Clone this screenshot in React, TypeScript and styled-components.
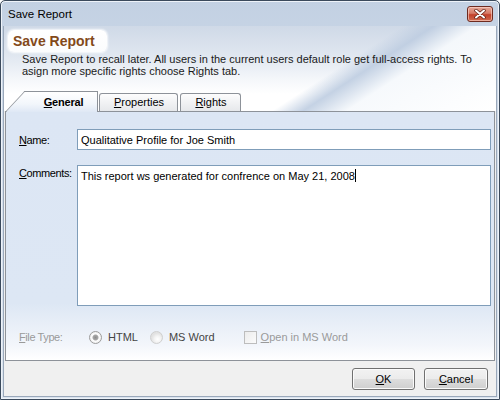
import React from "react";
import styled, { createGlobalStyle } from "styled-components";

const GlobalStyle = createGlobalStyle`
  html, body { margin: 0; padding: 0; }
  body {
    width: 500px; height: 400px; overflow: hidden;
    font-family: "Liberation Sans", Arial, sans-serif;
    font-size: 11px; color: #000;
  }
  * { box-sizing: border-box; }
`;

const Window = styled.div`
  width: 500px;
  height: 400px;
  border: 1px solid #3b4a5c;
  border-radius: 5px 5px 0 0;
  background: linear-gradient(to bottom, #c3d1e3 0%, #d2ddeb 40%, #dbe4ef 100%);
  padding: 0 2px 2px;
  display: flex;
  flex-direction: column;
  box-shadow: inset 0 0 0 1px #eef3f9;
`;

const TitleBar = styled.div`
  height: 25px;
  flex: none;
  display: flex;
  align-items: center;
  justify-content: space-between;
  padding: 0 4px 0 5px;
`;

const TitleText = styled.span`
  font-size: 11.5px;
  color: #000;
`;

const CloseButton = styled.div`
  width: 26px;
  height: 16px;
  border: 1px solid #6e2b20;
  border-radius: 3px;
  background: linear-gradient(to bottom, #e4a898 0%, #d77a66 45%, #c2402a 55%, #d06a4e 100%);
  box-shadow: inset 0 0 0 1px rgba(255, 220, 210, 0.6);
  display: flex;
  align-items: center;
  justify-content: center;
`;

const Body = styled.div`
  flex: 1;
  display: flex;
  flex-direction: column;
  background: #f0f0f0;
  border: 1px solid #9aa8ba;
  border-top: none;
`;

const Top = styled.div`
  height: 85px;
  flex: none;
  display: flex;
  flex-direction: column;
  background:
    linear-gradient(147deg, rgba(255,255,255,0) 0%, rgba(255,255,255,0) 64%, rgba(190,205,225,0.9) 69%, rgba(246,249,252,0.95) 76%, rgba(255,255,255,0.9) 100%),
    linear-gradient(to bottom, #cfd9e7 0%, #e0e7f0 35%, #f6f8fb 65%, #ffffff 80%);
`;

const Badge = styled.div`
  align-self: flex-start;
  margin: 4px 0 0 4px;
  height: 22px;
  padding: 0 12px 0 5px;
  border-radius: 6px;
  background: linear-gradient(to bottom, #ffffff, #fbfcfd);
  box-shadow: 0 0 2px 1px rgba(255, 255, 255, 0.8);
  font-size: 14px;
  font-weight: bold;
  line-height: 22px;
  color: #83491a;
`;

const Description = styled.p`
  margin: 1px 0 0 18px;
  width: 460px;
  font-size: 11px;
  line-height: 12px;
  color: #1a1a1a;
`;

const TabStrip = styled.div`
  margin-top: auto;
  height: 20px;
  display: flex;
  align-items: flex-end;
  padding-left: 1px;
  position: relative;
  z-index: 1;
`;

const SelectedTab = styled.div`
  position: relative;
  z-index: 1;
  margin-left: 20px;
  width: 73px;
  height: 21px;
  margin-bottom: -1px;
  border-top: 1px solid #8d9299;
  border-right: 1px solid #8d9299;
  background: linear-gradient(to bottom, #ffffff 0%, #f2f6fb 60%, #dfe8f5 100%);
  display: flex;
  align-items: center;
  justify-content: center;
  padding: 0 0 1px 5px;
  font-weight: bold;
  letter-spacing: -0.2px;

  &::before {
    content: "";
    position: absolute;
    z-index: -1;
    left: -20px;
    top: -1px;
    bottom: 0;
    width: 32px;
    border-left: 1px solid #8d9299;
    border-top: 1px solid #8d9299;
    background: linear-gradient(to bottom, #ffffff 0%, #f2f6fb 60%, #dfe8f5 100%);
    transform-origin: bottom left;
    transform: skewX(-43deg);
  }
`;

const Tab = styled.div<{ $width: number; $gap: number }>`
  width: ${(p) => p.$width}px;
  margin-left: ${(p) => p.$gap}px;
  height: 18px;
  border: 1px solid #8d9299;
  border-bottom: none;
  border-radius: 3px 3px 0 0;
  background: linear-gradient(to bottom, #fdfdfd 0%, #f1f2f4 50%, #e6e8eb 100%);
  display: flex;
  align-items: center;
  justify-content: center;
  padding: 0 0 1px 1px;
`;

const Panel = styled.div`
  flex: none;
  height: 250px;
  margin: 0 1px;
  border: 1px solid #8d9299;
  background: linear-gradient(to bottom, #dce6f4 0%, #dde7f4 77%, #f3f6fb 94%, #ffffff 100%);
  padding: 17px 3px 0 13px;
  display: flex;
  flex-direction: column;
`;

const FormGrid = styled.div`
  display: grid;
  grid-template-columns: 58px 1fr;
  row-gap: 15px;
`;

const FieldLabel = styled.div<{ $top?: boolean }>`
  align-self: ${(p) => (p.$top ? "start" : "center")};
  padding-top: ${(p) => (p.$top ? "2px" : "0")};
  letter-spacing: -0.4px;
  color: #000;
`;

const TextField = styled.div`
  height: 21px;
  border: 1px solid #7f9db9;
  background: #fff;
  padding: 0 3px;
  display: flex;
  align-items: center;
  white-space: nowrap;
`;

const TextArea = styled.div`
  height: 141px;
  border: 1px solid #7f9db9;
  background: #fff;
  padding: 3px 3px;
  line-height: 14px;
`;

const Caret = styled.span`
  display: inline-block;
  width: 1px;
  height: 13px;
  background: #000;
  vertical-align: -2px;
`;

const OptionsRow = styled.div`
  margin-top: 21px;
  height: 20px;
  display: flex;
  align-items: center;
`;

const DimLabel = styled.span<{ $width?: number }>`
  color: #9a9a9a;
  letter-spacing: -0.4px;
  ${(p) => (p.$width ? `width: ${p.$width}px;` : "")}
`;

const Option = styled.div<{ $gap: number }>`
  display: flex;
  align-items: center;
  margin-left: ${(p) => p.$gap}px;
`;

const Radio = styled.span<{ $checked?: boolean }>`
  width: 13px;
  height: 13px;
  border-radius: 50%;
  border: 1px solid ${(p) => (p.$checked ? "#9c9c9c" : "#cfcfcf")};
  background: ${(p) =>
    p.$checked
      ? "radial-gradient(circle at 50% 50%, #8c8c8c 0, #a8a8a8 2.5px, #ffffff 3.5px, #f3f3f3 5px)"
      : "radial-gradient(circle at 60% 65%, #ffffff 0, #f4f4f4 3px, #e2e2e2 6px)"};
  margin-right: 6px;
  flex: none;
`;

const Check = styled.span`
  width: 13px;
  height: 13px;
  border: 1px solid #bdbdbd;
  background: linear-gradient(135deg, #ececec, #fbfbfb);
  margin-right: 4px;
  flex: none;
`;

const OptionText = styled.span<{ $dim?: boolean }>`
  color: ${(p) => (p.$dim ? "#9a9a9a" : "#444")};
`;

const Footer = styled.div`
  flex: 1;
  display: flex;
  justify-content: flex-end;
  align-items: flex-start;
  gap: 9px;
  padding: 7px 8px 0 0;
`;

const Button = styled.div<{ $width: number }>`
  width: ${(p) => p.$width}px;
  height: 22px;
  border: 1px solid #707070;
  border-radius: 3px;
  background: linear-gradient(to bottom, #f2f2f2 0%, #ebebeb 50%, #dddddd 51%, #cfcfcf 100%);
  box-shadow: inset 0 0 0 1px #fbfbfb;
  display: flex;
  align-items: center;
  justify-content: center;
`;

const U = styled.span`
  text-decoration: underline;
`;

const CloseIcon = () => (
  <svg width="12" height="10" viewBox="0 0 12 10">
    <path d="M2 1.5 L10 8.5 M10 1.5 L2 8.5" stroke="#5a1a10" strokeWidth="3.4" strokeLinecap="round" />
    <path d="M2 1.5 L10 8.5 M10 1.5 L2 8.5" stroke="#ffffff" strokeWidth="2" strokeLinecap="round" />
  </svg>
);

export default function App() {
  return (
    <>
      <GlobalStyle />
      <Window>
        <TitleBar>
          <TitleText>Save Report</TitleText>
          <CloseButton>
            <CloseIcon />
          </CloseButton>
        </TitleBar>
        <Body>
          <Top>
            <Badge>Save Report</Badge>
            <Description>
              Save Report to recall later. All users in the current users default role get full-access rights. To
              asign more specific rights choose Rights tab.
            </Description>
            <TabStrip>
              <SelectedTab>
                <span><U>G</U>eneral</span>
              </SelectedTab>
              <Tab $width={79} $gap={1}>
                <span><U>P</U>roperties</span>
              </Tab>
              <Tab $width={61} $gap={2}>
                <span><U>R</U>ights</span>
              </Tab>
            </TabStrip>
          </Top>
          <Panel>
            <FormGrid>
              <FieldLabel><U>N</U>ame:</FieldLabel>
              <TextField>Qualitative Profile for Joe Smith</TextField>
              <FieldLabel $top><U>C</U>omments:</FieldLabel>
              <TextArea>
                This report ws generated for confrence on May 21, 2008<Caret />
              </TextArea>
            </FormGrid>
            <OptionsRow>
              <DimLabel $width={70}><U>F</U>ile Type:</DimLabel>
              <Option $gap={0}>
                <Radio $checked />
                <OptionText>HTML</OptionText>
              </Option>
              <Option $gap={12}>
                <Radio />
                <OptionText>MS Word</OptionText>
              </Option>
              <Option $gap={29}>
                <Check />
                <OptionText $dim><U>O</U>pen in MS Word</OptionText>
              </Option>
            </OptionsRow>
          </Panel>
          <Footer>
            <Button $width={63}><span><U>O</U>K</span></Button>
            <Button $width={64}><span><U>C</U>ancel</span></Button>
          </Footer>
        </Body>
      </Window>
    </>
  );
}
